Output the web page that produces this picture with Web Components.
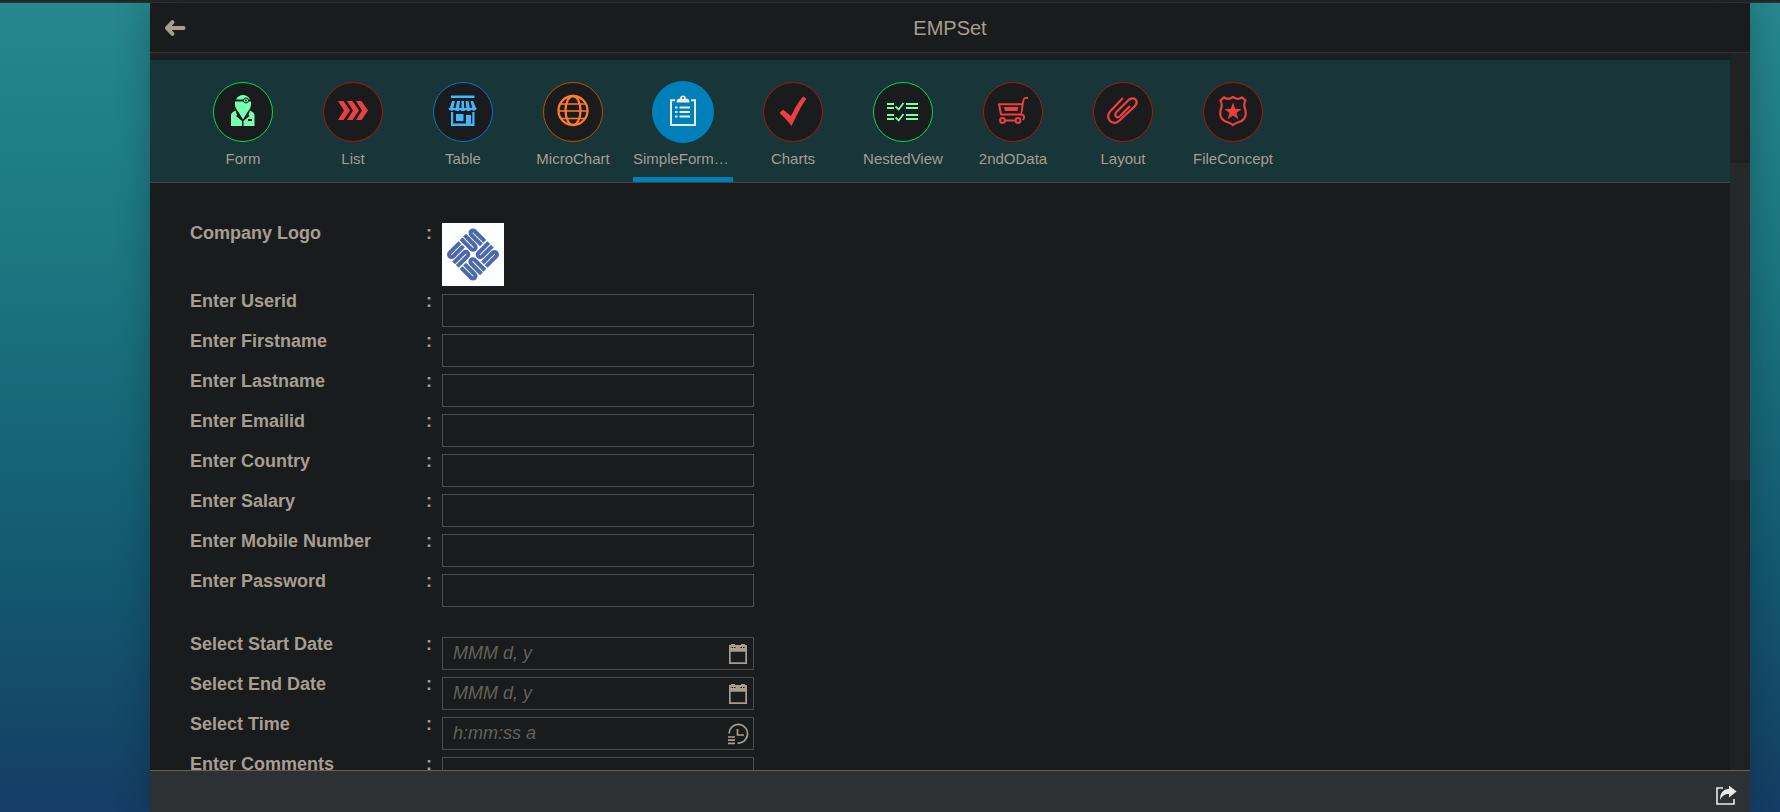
<!DOCTYPE html>
<html lang="en">
<head>
<meta charset="utf-8">
<title>EMPSet</title>
<style>
  html, body { margin: 0; height: 100%; }
  body {
    font-family: "Liberation Sans", Arial, sans-serif;
    color: #a69e92;
    background: linear-gradient(to bottom, #26888d 0%, #1b7680 33%, #13586f 71%, #153d65 100%);
    overflow: hidden;
  }
</style>
</head>
<body>
<emp-app></emp-app>

<script>
const ICONS = {
  back: ['0 0 24 24', '<g fill="none" stroke="currentColor" stroke-width="4" stroke-linecap="round" stroke-linejoin="round"><path d="M20.500 12H5"/><path d="M9.500 6.200L4 12l5.500 5.800"/></g>'],
  share: ['0 0 24 24', '<path d="M9 4H3v16h17v-5" fill="none" stroke="currentColor" stroke-width="1.600"/><path d="M15 1.500l7.500 6L15 13.500V10c-4 0-6.500 1-9 6 0-7 3-11 9-11z"/>'],
  calendar: ['0 0 24 24', '<path d="M3 3h2V2h4v1h6V2h4v1h2v19H3zM4.700 9.700v10.600h14.600V9.700z" fill-rule="evenodd"/><path d="M5.500 5.500h1.500m1 0h1.500m5 0h1.500m1 0h1.500" stroke="#191b1c" stroke-width="1"/>'],
  clock: ['0 0 24 24', '<g fill="none" stroke="currentColor" stroke-width="1.700"><path d="M3 11.500A9.300 9.300 0 1 1 11.500 21"/><path d="M11.500 7v6H18"/><path d="M2 15h7M2 18.200h7M2 21.400h7"/></g>'],
  doctor: ['0 0 40 40', '<path d="M13 7.500C14.500 4.500 17 3 20 3s5.500 1.500 7 4.500z"/><path d="M12 9.500h16c.500 4.500-1 8-3.500 10.500L20 27.500 15.500 20C13 17.500 11.500 14 12 9.500z"/><circle cx="23" cy="8.500" r="2.500" stroke="#191b1c" stroke-width="1"/><circle cx="23" cy="8.500" r="1" fill="#191b1c"/><path d="M8 34V23c0-2 2-3 4.500-4.500L14 23l-1 1 6 5v5z"/><path d="M31.500 34V23c0-2-2-3-4.500-4.500L25.500 23l1 1-6 5v5z"/><path d="M25 27h4v2h-4z" fill="#191b1c"/>'],
  chevrons: ['0 0 40 40', '<path d="M5 9h5.500l6.500 9.500-6.500 9.500H5l6-9.500zM14 9h5.500l6.500 9.500-6.500 9.500H14l6-9.500zM23 9h5.500l6.500 9.500-6.500 9.500H23l6-9.500z"/>'],
  store: ['0 0 40 40', '<path d="M8 3.500h23.500V6H8z"/><path d="M9 9h3l-2 8H6.500zM14 9h3l-1 8h-3.500zM18.500 9H21v8h-2.500zM22.500 9h3l1.500 8h-3.500zM27.500 9H30l3.500 8h-4z"/><path d="M5.500 16h28c0 3-3.500 3.500-5 1.800-1.500 1.700-4.500 1.700-5.500 0-1 1.700-5 1.700-6 0-1 1.700-4 1.700-5.500 0-2 1.700-6 1.200-6-1.800z"/><path d="M8 20h2.200v11.500H23V23h5v8.500h1.300V20h2.200v14H8z"/><path d="M13 22h7.500v7H13z"/>'],
  globe: ['0 0 40 40', '<g fill="none" stroke="currentColor" stroke-width="2.300"><circle cx="20" cy="18.500" r="14.500"/><ellipse cx="20" cy="18.500" rx="7.500" ry="14.500"/><path d="M7.500 12h25M5.500 19h29M7.500 26.500h25" stroke-width="1.300"/></g>'],
  clipboard: ['0 0 40 40', '<path d="M12 8.200H8V33h24V8.200h-4" fill="none" stroke="currentColor" stroke-width="2"/><path d="M13.500 10.500c0-2.500 1-4 3.500-4 0-4 6-4 6 0 2.500 0 3.500 1.500 3.500 4z"/><circle cx="20" cy="6" r="1" fill="#0080ba"/><path d="M12 15.500h2.500M16.500 15.500H27M12 20h2.500M16.500 20H27M12 24.500h2.500M16.500 24.500H27" stroke="currentColor" stroke-width="2"/>'],
  check: ['0 0 40 40', '<path d="M6.500 21l3.500-3.500 8 6.500C21 18 25 10 30 4.500l3.500 2C28 14 23 25 18.500 34 15 29 11 25 6.500 21z"/>'],
  tasks: ['0 0 40 40', '<path d="M4 12h7M4 16h7M4 23h7M4 27h7M23 12h12M23 16h12M23 23h12M23 27h12" stroke="currentColor" stroke-width="2"/><path d="M12.500 14.500l3.200 3 4.800-6.500M12.500 25.500l3.200 3 4.800-6.500" fill="none" stroke="currentColor" stroke-width="1.800"/>'],
  cart: ['0 0 40 40', '<g fill="none" stroke="currentColor" stroke-width="2" stroke-linejoin="round"><path d="M29 12.300H6l2 10.200H27.500c2 0 1.500-16.500 4.500-16.500h3"/><path d="M27.500 22.500c4 0 4.500 3 2.500 5.500"/><circle cx="9.500" cy="28.500" r="2.400"/><circle cx="25" cy="28.500" r="2.400"/><path d="M12 28.500h10.500"/></g><path d="M11 15h14.500l-1 4h-12.500z"/>'],
  clip: ['0 0 40 40', '<path d="M20 6L7.500 19c-3 3-3 7.500-.5 10s6.500 2.500 9.500-.5L32 14c2-2.500 2-5 .5-6.500s-4.500-1.500-7 .5L13.500 20c-1.500 1.500-1.500 3.500-.5 4.500s2.700 1 4.300-.5L27 14" fill="none" stroke="currentColor" stroke-width="2.300"/>'],
  badge: ['0 0 40 40', '<path d="M11 5.500c3 2 6 1.500 9-.5 3 2 6 2.500 9 .5l3.500 3c-2 3-1.500 6 0 10 1 5 0 8-4 10.500-3 1.500-6 1.500-8.500 4-2.500-2.500-5.500-2.500-8.500-4-4-2.500-5-5.500-4-10.500 1.500-4 2-7 0-10z" fill="none" stroke="currentColor" stroke-width="2.200"/><path d="M20 10.500l2.200 6.200 6.300.2-5 4 1.800 6.300-5.300-3.700-5.300 3.700 1.800-6.300-5-4 6.300-.2z"/>']
};

const attach = (host, html) => { host.attachShadow({ mode: 'open' }).innerHTML = html; };

class UiIcon extends HTMLElement {
  connectedCallback() {
    if (this.shadowRoot) return;
    const [box, body] = ICONS[this.getAttribute('name')];
    attach(this, `<style>:host{display:block;width:24px;height:24px}svg{display:block;width:100%;height:100%}</style>
      <svg viewBox="${box}" fill="currentColor" aria-hidden="true">${body}</svg>`);
  }
}

/* Four interlocked pairs of bars, turned round the centre of a diamond. */
class CompanyLogo extends HTMLElement {
  connectedCallback() {
    if (this.shadowRoot) return;
    const pair = '<path d="M-.800-17.700H-15.200a2.500 2.500 0 0 0 0 5H-.800M-19.600-7.700H-5a2.500 2.500 0 0 1 0 5H-19.600"/>';
    const turns = [0, 90, 180, 270].map(a => `<g transform="rotate(${a})">${pair}</g>`).join('');
    attach(this, `<style>:host{display:block;width:62px;height:63px;background:#fff}svg{display:block}</style>
      <svg width="62" height="63" viewBox="0 0 62 63" role="img" aria-label="Company logo">
        <g transform="translate(31 31.500) rotate(45)" fill="none" stroke="#4b69ae" stroke-width="4">${turns}</g></svg>`);
  }
}

class TabItem extends HTMLElement {
  connectedCallback() {
    if (this.shadowRoot) return;
    const on = this.hasAttribute('selected');
    attach(this, `<style>
      :host{display:block;width:100px}
      button{all:unset;box-sizing:border-box;width:100%;height:122px;padding-top:21px;display:flex;flex-direction:column;align-items:center;cursor:pointer}
      .ring{box-sizing:border-box;width:62px;height:62px;padding:1px}
      .disc{display:block;box-sizing:border-box;width:60px;height:60px;border:1px solid var(--ring);border-radius:50%;background:#191b1c;color:var(--ink);padding:9px}
      :host([selected]) .ring{padding:0}
      :host([selected]) .disc{width:62px;height:62px;padding:10px;background:#0080ba}
      ui-icon{width:40px;height:40px}
      .text{width:100%;margin-top:7px;font-size:15px;line-height:18px;text-align:center;white-space:nowrap}
      :host([selected]) .text{text-align:left}
      .bar{width:100%;height:5px;margin-top:auto}
      :host([selected]) .bar{background:#0080ba}
    </style>
    <button role="tab" aria-selected="${on}"><span class="ring"><span class="disc"><ui-icon name="${this.getAttribute('icon')}"></ui-icon></span></span><span class="text"><slot></slot></span><span class="bar"></span></button>`);
    const tones = { green: ['#00d85c', '#76ffb0'], red: ['#a81818', '#ec4040'], blue: ['#0a78c0', '#40b8ff'], orange: ['#c04c08', '#ff7a30'], active: ['#0080ba', '#eceae6'] };
    const [ring, ink] = tones[this.getAttribute('tone')];
    this.style.setProperty('--ring', ring);
    this.style.setProperty('--ink', ink);
  }
}

class TabStrip extends HTMLElement {
  connectedCallback() {
    if (this.shadowRoot) return;
    attach(this, `<style>
      :host{display:block;background:#183538;border-bottom:1px solid #3f4345}
      div{display:flex;gap:10px;padding-left:43px}
    </style><div role="tablist"><slot></slot></div>`);
  }
}

class FormRow extends HTMLElement {
  connectedCallback() {
    if (this.shadowRoot) return;
    const kind = this.getAttribute('kind') || 'text';
    const label = this.getAttribute('label');
    const hint = this.getAttribute('hint') || '';
    const icon = this.getAttribute('icon');
    let field;
    if (kind === 'slot') field = '<slot></slot>';
    else if (kind === 'area') field = '<textarea id="f"></textarea>';
    else field = `<input id="f" type="${kind}" placeholder="${hint}">` +
      (icon ? `<button type="button" aria-label="Open ${label}"><ui-icon name="${icon}"></ui-icon></button>` : '');
    const name = `<span>${label}</span><span>:</span>`;
    attach(this, `<style>
      :host{display:flex;gap:10px;min-height:40px;font-size:18px;line-height:22px}
      .name{width:242px;display:flex;justify-content:space-between;font-weight:bold}
      .box{box-sizing:border-box;width:312px;height:33px;margin-top:4px;border:1px solid #4a4c4d;display:flex;align-items:center}
      .box.tall{height:100px}
      .plain{padding:1px 0 4px}
      input,textarea{box-sizing:border-box;flex:1;min-width:0;height:100%;margin:0;padding:0 10px;border:0;outline:0;background:none;color:inherit;font:inherit;resize:none}
      input::placeholder{color:#65615b;font-style:italic;opacity:1}
      button{all:unset;padding-right:3px;cursor:pointer}
    </style>
    ${kind === 'slot' ? `<div class="name">${name}</div>` : `<label class="name" for="f">${name}</label>`}
    <div class="${kind === 'slot' ? 'plain' : kind === 'area' ? 'box tall' : 'box'}">${field}</div>`);
  }
}

class ScrollRail extends HTMLElement {
  connectedCallback() {
    if (this.shadowRoot) return;
    attach(this, `<style>
      :host{display:flex;flex-direction:column;flex:none;width:20px;background:#1f2122}
      .before{flex:110}.thumb{flex:317;background:#26292b}.after{flex:290}
    </style><div class="before"></div><div class="thumb"></div><div class="after"></div>`);
  }
}

class EmpApp extends HTMLElement {
  connectedCallback() {
    if (this.shadowRoot) return;
    attach(this, `<style>
      :host{display:flex;flex-direction:column;height:100vh}
      .edge{flex:none;height:3px;box-sizing:border-box;background:#242627;border-bottom:1px solid #303335}
      .panel{flex:1;min-height:0;margin:0 30px 0 150px;display:flex;flex-direction:column;background:#191b1c;box-shadow:0 0 32px rgba(0,20,30,.3)}
      header{flex:none;display:grid;grid-template-columns:60px 1fr 60px;align-items:center;height:49px;border-bottom:1px solid #303233}
      h1{margin:0;font-size:20px;line-height:24px;font-weight:normal;text-align:center}
      button{all:unset;cursor:pointer}
      .back{padding-left:13px}
      .body{flex:1;min-height:0;display:flex}
      main{flex:1;min-width:0;overflow:hidden;padding-top:7px;background:linear-gradient(#1a2022 7px,#191b1c 7px)}
      form{display:flex;flex-direction:column;padding:39px 40px 0}
      .dates{margin-top:23px}
      footer{flex:none;box-sizing:border-box;height:42px;border-top:1px solid #665f52;background:#2e3134;display:flex;justify-content:flex-end;align-items:center;padding:8px 12px 0 0;color:#eceae6}
    </style>
    <div class="edge"></div>
    <div class="panel">
      <header>
        <button class="back" aria-label="Back"><ui-icon name="back"></ui-icon></button>
        <h1>EMPSet</h1>
      </header>
      <div class="body">
        <main>
          <tab-strip>
            <tab-item icon="doctor" tone="green">Form</tab-item>
            <tab-item icon="chevrons" tone="red">List</tab-item>
            <tab-item icon="store" tone="blue">Table</tab-item>
            <tab-item icon="globe" tone="orange">MicroChart</tab-item>
            <tab-item icon="clipboard" tone="active" selected>SimpleForm…</tab-item>
            <tab-item icon="check" tone="red">Charts</tab-item>
            <tab-item icon="tasks" tone="green">NestedView</tab-item>
            <tab-item icon="cart" tone="red">2ndOData</tab-item>
            <tab-item icon="clip" tone="red">Layout</tab-item>
            <tab-item icon="badge" tone="red">FileConcept</tab-item>
          </tab-strip>
          <form>
            <form-row label="Company Logo" kind="slot"><company-logo></company-logo></form-row>
            <form-row label="Enter Userid"></form-row>
            <form-row label="Enter Firstname"></form-row>
            <form-row label="Enter Lastname"></form-row>
            <form-row label="Enter Emailid" kind="email"></form-row>
            <form-row label="Enter Country"></form-row>
            <form-row label="Enter Salary"></form-row>
            <form-row label="Enter Mobile Number" kind="tel"></form-row>
            <form-row label="Enter Password" kind="password"></form-row>
            <form-row class="dates" label="Select Start Date" hint="MMM d, y" icon="calendar"></form-row>
            <form-row label="Select End Date" hint="MMM d, y" icon="calendar"></form-row>
            <form-row label="Select Time" hint="h:mm:ss a" icon="clock"></form-row>
            <form-row label="Enter Comments" kind="area"></form-row>
          </form>
        </main>
        <scroll-rail></scroll-rail>
      </div>
      <footer><button aria-label="Share"><ui-icon name="share"></ui-icon></button></footer>
    </div>`);
  }
}

customElements.define('ui-icon', UiIcon);
customElements.define('company-logo', CompanyLogo);
customElements.define('tab-item', TabItem);
customElements.define('tab-strip', TabStrip);
customElements.define('form-row', FormRow);
customElements.define('scroll-rail', ScrollRail);
customElements.define('emp-app', EmpApp);
</script>
</body>
</html>
